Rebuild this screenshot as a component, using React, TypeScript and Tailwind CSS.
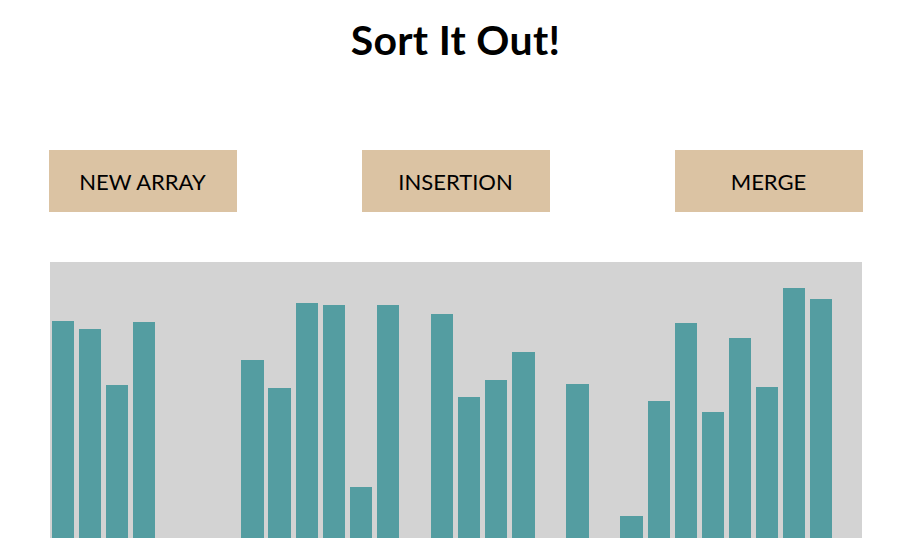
import React from "react";

const heights = [241, 233, 177, 240, 10, 14, 8, 202, 174, 259, 257, 75, 257, 12, 248, 165, 182, 210, 16, 178, 6, 46, 161, 239, 150, 224, 175, 274, 263, 18];

export default function App() {
  return (
    <div className="w-full h-[538px] overflow-hidden bg-white text-black" style={{ fontFamily: "Lato, 'Open Sans', sans-serif" }}>
      <h1 className="text-center text-[41px] font-bold leading-[41px] pt-[19px] tracking-[0.3px]">Sort It Out!</h1>
      <div className="mx-auto w-[814px] flex justify-between mt-[90px]">
        {["NEW ARRAY", "INSERTION", "MERGE"].map((t) => (
          <button key={t} className="w-[188px] h-[62px] bg-[#dbc3a3] text-[22px] text-black flex items-center justify-center">
            {t}
          </button>
        ))}
      </div>
      <div className="mx-auto w-[812px] h-[300px] mt-[50px] bg-[#d3d3d3] flex items-end pl-[2.3px]">
        {heights.map((h, i) => (
          <div key={i} className="shrink-0 w-[22.4px] mr-[4.69px] bg-[#549da1]" style={{ height: h }} />
        ))}
      </div>
    </div>
  );
}
